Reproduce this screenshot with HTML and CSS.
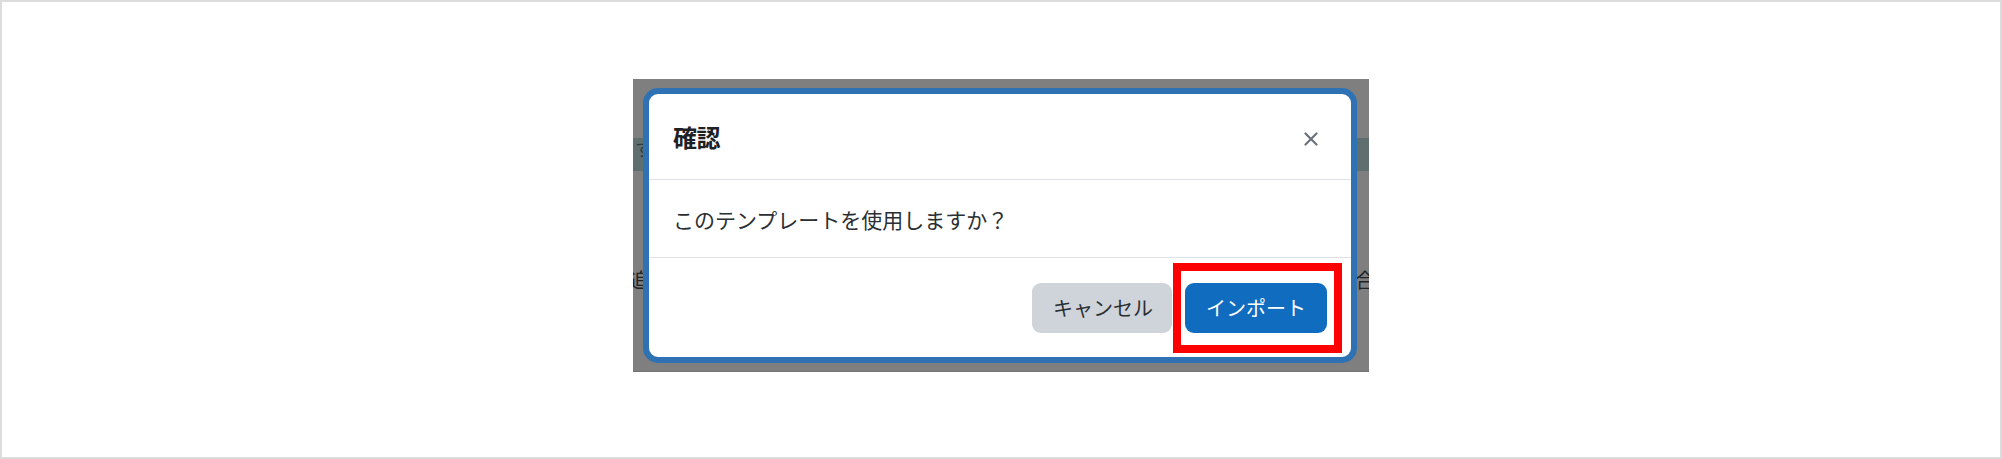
FILE: index.html
```html
<!DOCTYPE html>
<html lang="ja">
<head>
<meta charset="utf-8">
<title>確認</title>
<link rel="stylesheet" href="styles.css">
</head>
<body>
<div class="frame">
  <div class="shot">
    <div class="under">
      <div class="under-band"><span class="frag frag-l1">をす</span></div>
      <div class="under-row">
        <span class="frag frag-l2">追</span>
        <span class="frag frag-r2">合</span>
      </div>
      <div class="under-line"></div>
    </div>
    <div class="modal">
      <div class="modal-header">
        <h5 class="modal-title">確認</h5>
        <span class="close" aria-label="閉じる">
          <svg width="14" height="14" viewBox="0 0 14 14"><path d="M1.5 1.5L12.5 12.5M12.5 1.5L1.5 12.5" stroke="#6a7178" stroke-width="2.2" stroke-linecap="round"/></svg>
        </span>
      </div>
      <div class="modal-body">このテンプレートを使用しますか？</div>
      <div class="modal-footer">
        <button class="btn btn-secondary">キャンセル</button>
        <span class="highlight">
          <button class="btn btn-primary">インポート</button>
          <span class="mark"></span>
        </span>
      </div>
    </div>
  </div>
</div>
</body>
</html>
```
FILE: styles.css
```css
html, body {
  margin: 0;
  padding: 0;
  background: #ffffff;
}

.frame {
  box-sizing: border-box;
  width: 2002px;
  height: 459px;
  border: 2px solid #dcdcdc;
  background: #ffffff;
  display: flex;
  justify-content: center;
  align-items: flex-start;
  padding-top: 77px;
  font-family: "Noto Sans CJK JP", "Noto Sans", sans-serif;
}

.shot {
  position: relative;
  box-sizing: border-box;
  width: 736px;
  height: 293px;
  background: #7f7f7f;
  padding: 9px 12px 9px 10px;
  overflow: hidden;
}

.under {
  position: absolute;
  inset: 0;
  display: flex;
  flex-direction: column;
}

.under-band {
  margin-top: 59px;
  height: 42px;
  background: #5f6e6f;
  position: relative;
}

.under-row {
  position: relative;
  height: 40px;
  margin-top: 86px;
}

.under-line {
  margin-top: 82px;
  height: 1px;
  background: #747474;
}

.frag {
  position: absolute;
  font-size: 20px;
  line-height: 1;
  color: #1e2326;
}

.frag-l1 {
  left: -16px;
  top: 1px;
  font-size: 18px;
  color: #2c3a44;
}

.frag-l2 {
  left: -4px;
  top: 13px;
}

.frag-r2 {
  right: -6px;
  top: 13px;
}

.modal {
  position: relative;
  box-sizing: border-box;
  width: 714px;
  border: 6px solid #2f72b3;
  border-radius: 15px;
  background: #ffffff;
  overflow: hidden;
}

.modal-header {
  box-sizing: border-box;
  height: 86px;
  display: flex;
  align-items: center;
  justify-content: space-between;
  padding: 0 33px 0 24px;
  border-bottom: 1px solid #dee2e6;
}

.modal-title {
  margin: 0;
  font-size: 24px;
  font-weight: 700;
  line-height: 1;
  color: #1d2125;
  letter-spacing: -0.5px;
}

.close {
  display: flex;
  width: 14px;
  height: 14px;
  margin-top: 4px;
}

.modal-body {
  box-sizing: border-box;
  height: 78px;
  display: flex;
  align-items: center;
  padding: 0 24px;
  font-size: 21px;
  color: #2b2f33;
  border-bottom: 1px solid #dee2e6;
}

.modal-footer {
  height: 99px;
  display: flex;
  align-items: center;
  justify-content: flex-end;
  gap: 13px;
  padding: 0 24px;
}

.btn {
  height: 50px;
  border: none;
  border-radius: 9px;
  padding: 0 20px;
  font-family: "Noto Sans CJK JP", "Noto Sans", sans-serif;
  font-size: 20px;
  line-height: 1;
  cursor: pointer;
}

.btn-secondary {
  background: #ced4da;
  color: #2a2e32;
  padding: 0 19px 0 21px;
}

.btn-primary {
  background: #0f6cbf;
  color: #ffffff;
  padding: 0 21px;
}

.highlight {
  position: relative;
  display: flex;
}

.mark {
  position: absolute;
  top: -20px;
  bottom: -20px;
  left: -12px;
  right: -15px;
  border: 8px solid #ff0000;
  pointer-events: none;
}
```
